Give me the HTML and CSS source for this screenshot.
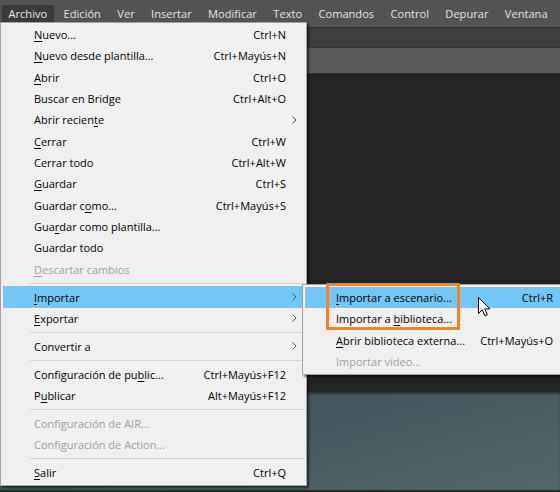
FILE: index.html
```html
<!DOCTYPE html>
<html lang="es">
<head>
<meta charset="utf-8">
<title>Archivo</title>
<link rel="stylesheet" href="styles.css">
</head>
<body>
<div class="app">
  <header class="menubar">
    <span class="mb-item active">Archivo</span>
    <span class="mb-item">Edición</span>
    <span class="mb-item">Ver</span>
    <span class="mb-item">Insertar</span>
    <span class="mb-item">Modificar</span>
    <span class="mb-item">Texto</span>
    <span class="mb-item">Comandos</span>
    <span class="mb-item">Control</span>
    <span class="mb-item">Depurar</span>
    <span class="mb-item">Ventana</span>
  </header>
  <div class="toolbar"></div>
  <div class="tabs"></div>
  <div class="workspace"></div>
  <div class="stage"></div>
  <div class="statusline"></div>

  <div class="menu main-menu">
    <div class="row"><span class="label"><u>N</u>uevo...</span><span class="key">Ctrl+N</span><span class="sub"></span></div>
    <div class="row"><span class="label"><u>N</u>uevo desde plantilla...</span><span class="key">Ctrl+Mayús+N</span><span class="sub"></span></div>
    <div class="row"><span class="label"><u>A</u>brir</span><span class="key">Ctrl+O</span><span class="sub"></span></div>
    <div class="row"><span class="label">Buscar en Bridge</span><span class="key">Ctrl+Alt+O</span><span class="sub"></span></div>
    <div class="row"><span class="label">Abrir recien<u>t</u>e</span><span class="key"></span><span class="sub"><svg class="chev" viewBox="0 0 5 8"><polyline points="0.5,0.5 4,4 0.5,7.5"/></svg></span></div>
    <div class="row"><span class="label"><u>C</u>errar</span><span class="key">Ctrl+W</span><span class="sub"></span></div>
    <div class="row"><span class="label">Cerrar todo</span><span class="key">Ctrl+Alt+W</span><span class="sub"></span></div>
    <div class="row"><span class="label"><u>G</u>uardar</span><span class="key">Ctrl+S</span><span class="sub"></span></div>
    <div class="row"><span class="label">Guardar c<u>o</u>mo...</span><span class="key">Ctrl+Mayús+S</span><span class="sub"></span></div>
    <div class="row"><span class="label">Gua<u>r</u>dar como plantilla...</span><span class="key"></span><span class="sub"></span></div>
    <div class="row"><span class="label">Guardar todo</span><span class="key"></span><span class="sub"></span></div>
    <div class="row disabled"><span class="label"><u>D</u>escartar cambios</span><span class="key"></span><span class="sub"></span></div>
    <div class="sep"></div>
    <div class="row hover"><span class="label"><u>I</u>mportar</span><span class="key"></span><span class="sub"><svg class="chev" viewBox="0 0 5 8"><polyline points="0.5,0.5 4,4 0.5,7.5"/></svg></span></div>
    <div class="row"><span class="label"><u>E</u>xportar</span><span class="key"></span><span class="sub"><svg class="chev" viewBox="0 0 5 8"><polyline points="0.5,0.5 4,4 0.5,7.5"/></svg></span></div>
    <div class="sep"></div>
    <div class="row"><span class="label">Convertir a</span><span class="key"></span><span class="sub"><svg class="chev" viewBox="0 0 5 8"><polyline points="0.5,0.5 4,4 0.5,7.5"/></svg></span></div>
    <div class="sep"></div>
    <div class="row"><span class="label">Configuración de pu<u>b</u>lic...</span><span class="key">Ctrl+Mayús+F12</span><span class="sub"></span></div>
    <div class="row"><span class="label">P<u>u</u>blicar</span><span class="key">Alt+Mayús+F12</span><span class="sub"></span></div>
    <div class="sep"></div>
    <div class="row disabled"><span class="label">Configuración de AIR...</span><span class="key"></span><span class="sub"></span></div>
    <div class="row disabled"><span class="label">Configuración de Action...</span><span class="key"></span><span class="sub"></span></div>
    <div class="sep"></div>
    <div class="row"><span class="label"><u>S</u>alir</span><span class="key">Ctrl+Q</span><span class="sub"></span></div>
  </div>

  <div class="menu submenu">
    <div class="row hover"><span class="label"><u>I</u>mportar a escenario...</span><span class="key">Ctrl+R</span><span class="sub"></span></div>
    <div class="row"><span class="label">Importar a <u>b</u>iblioteca...</span><span class="key"></span><span class="sub"></span></div>
    <div class="row"><span class="label"><u>A</u>brir biblioteca externa...</span><span class="key">Ctrl+Mayús+O</span><span class="sub"></span></div>
    <div class="row disabled"><span class="label">Importar vídeo...</span><span class="key"></span><span class="sub"></span></div>
  </div>

  <div class="annotation"></div>

  <svg class="cursor" viewBox="0 0 13 20">
    <path d="M0.5 0.5 L0.5 16.5 L4.3 12.8 L7 18.8 L9.4 17.8 L6.8 11.9 L11.8 11.9 Z"/>
  </svg>
</div>
</body>
</html>
```

FILE: styles.css
```css
html, body {
  margin: 0;
  padding: 0;
  overflow: hidden;
}

body {
  width: 560px;
  height: 492px;
  font-family: "Open Sans", "Noto Sans", sans-serif;
  font-size: 11px;
}

.app {
  position: relative;
  width: 560px;
  height: 492px;
  overflow: hidden;
  display: flex;
  flex-direction: column;
  background: #222222;
}

.menubar {
  height: 27px;
  flex: none;
  display: flex;
  align-items: center;
  gap: 3.4px;
  padding-left: 2px;
  background: #535353;
  border-bottom: 1px solid #303030;
  color: #e2e2e2;
  font-size: 11.1px;
}

.mb-item {
  height: 17px;
  line-height: 17px;
  padding: 0 6.5px;
  white-space: nowrap;
}

.mb-item.active {
  background: #3a3a3a;
  color: #e8e8e8;
}

.toolbar {
  height: 19px;
  flex: none;
  background: #3e3e3e;
  border-bottom: 1px solid #353535;
}

.tabs {
  height: 25px;
  flex: none;
  background: #5a5a5a;
  border-bottom: 1px solid #303030;
}

.workspace {
  height: 318px;
  flex: none;
  background: #232323;
}

.stage {
  height: 98px;
  flex: none;
  background: linear-gradient(165deg, #3b4c52 0%, #46585d 45%, #536669 100%);
  box-shadow: inset 0 2px 2px rgba(0, 0, 0, 0.35);
}

.statusline {
  flex: 1;
  background: #2a2a2a;
}

/* menus */
.menu {
  position: absolute;
  box-sizing: border-box;
  background: #f0f0f0;
  border: 1px solid #a3a3a3;
  color: #000;
  box-shadow: 2px 2px 2px rgba(0, 0, 0, 0.55);
}

.main-menu {
  left: 0;
  top: 22px;
  width: 307px;
  padding: 1px 4px 2px 2px;
}

.submenu {
  left: 302px;
  top: 284px;
  width: 272px;
  padding: 2px 4px 2px 2px;
}

.row {
  height: 21.33px;
  display: flex;
  align-items: center;
  padding-left: 31px;
  white-space: nowrap;
}

.row .label {
  flex: 1;
}

.row .key {
  text-align: right;
}

.row .sub {
  width: 15px;
  flex: none;
  display: flex;
  justify-content: center;
  padding-left: 1px;
}

.row.hover {
  background: #72c7f6;
}

.row.disabled {
  color: #a0a0a0;
}

u {
  text-decoration: underline;
  text-underline-offset: 2px;
}

.chev {
  width: 5px;
  height: 8px;
  fill: none;
  stroke: #555555;
  stroke-width: 1;
}

.sep {
  height: 6.5px;
  display: flex;
  align-items: center;
  margin-left: 27px;
  margin-right: -2px;
}

.sep::before {
  content: "";
  flex: 1;
  height: 1px;
  background: #d4d4d4;
}

.annotation {
  position: absolute;
  left: 326px;
  top: 283px;
  width: 134px;
  height: 47px;
  box-sizing: border-box;
  border: 3px solid #f7821e;
  border-radius: 1px;
}

.cursor {
  position: absolute;
  left: 478px;
  top: 297px;
  width: 13px;
  height: 20px;
  fill: #ffffff;
  stroke: #000000;
  stroke-width: 1;
  stroke-linejoin: miter;
}
```
